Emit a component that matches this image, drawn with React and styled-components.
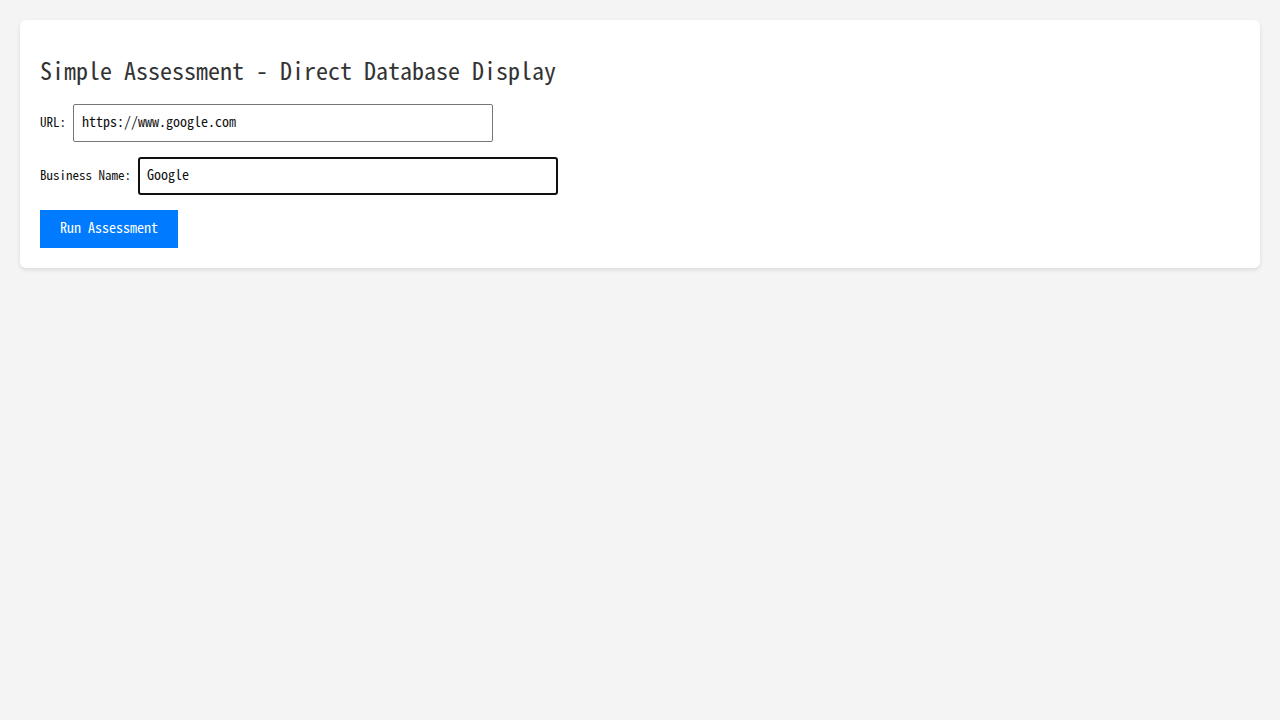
import { useState } from "react";
import styled, { createGlobalStyle } from "styled-components";

const mono = "'Noto Sans Mono CJK SC', 'DejaVu Sans Mono', monospace";

const GlobalStyle = createGlobalStyle`
    body {
        margin: 0;
        padding: 20px;
        background: #f4f4f4;
        font-family: ${mono};
    }
`;

function App() {
    const [url, setUrl] = useState("https://www.google.com");
    const [business, setBusiness] = useState("Google");

    return (
        <>
            <GlobalStyle />
            <Card>
                <Title>Simple Assessment - Direct Database Display</Title>
                <Row>
                    <Label htmlFor="url">URL:</Label>
                    <Input id="url" value={url} onChange={(e) => setUrl(e.target.value)} />
                </Row>
                <Row>
                    <Label htmlFor="business">Business Name:</Label>
                    <Input id="business" $focused value={business} onChange={(e) => setBusiness(e.target.value)} />
                </Row>
                <RunButton type="button">Run Assessment</RunButton>
            </Card>
        </>
    );
}

const Card = styled.div`
    background: #fff;
    border-radius: 6px;
    box-shadow: 0 2px 4px rgba(0, 0, 0, 0.1);
    padding: 20px;
`;

const Title = styled.h1`
    margin: 16px 0 20px;
    font-size: 24px;
    font-weight: normal;
    line-height: 28px;
    color: #333;
`;

const Row = styled.div`
    display: flex;
    align-items: center;
    margin-bottom: 15px;
`;

const Label = styled.label`
    font-size: 13px;
    color: #111;
    margin: 0 7px 4px 0;
`;

const Input = styled.input`
    box-sizing: border-box;
    width: 420px;
    height: 38px;
    font-family: ${mono};
    font-size: 14px;
    color: #111;
    border: ${(p) => (p.$focused ? "2px solid #101010" : "1px solid #767676")};
    border-radius: ${(p) => (p.$focused ? "3px" : "2px")};
    padding: ${(p) => (p.$focused ? "0 7px 4px" : "0 8px 4px")};
    outline: none;
`;

const RunButton = styled.button`
    display: block;
    background: #007bff;
    color: #fff;
    border: none;
    padding: 8px 20px 12px;
    font-family: ${mono};
    font-size: 14px;
    line-height: 18px;
    cursor: pointer;
`;

export default App;
